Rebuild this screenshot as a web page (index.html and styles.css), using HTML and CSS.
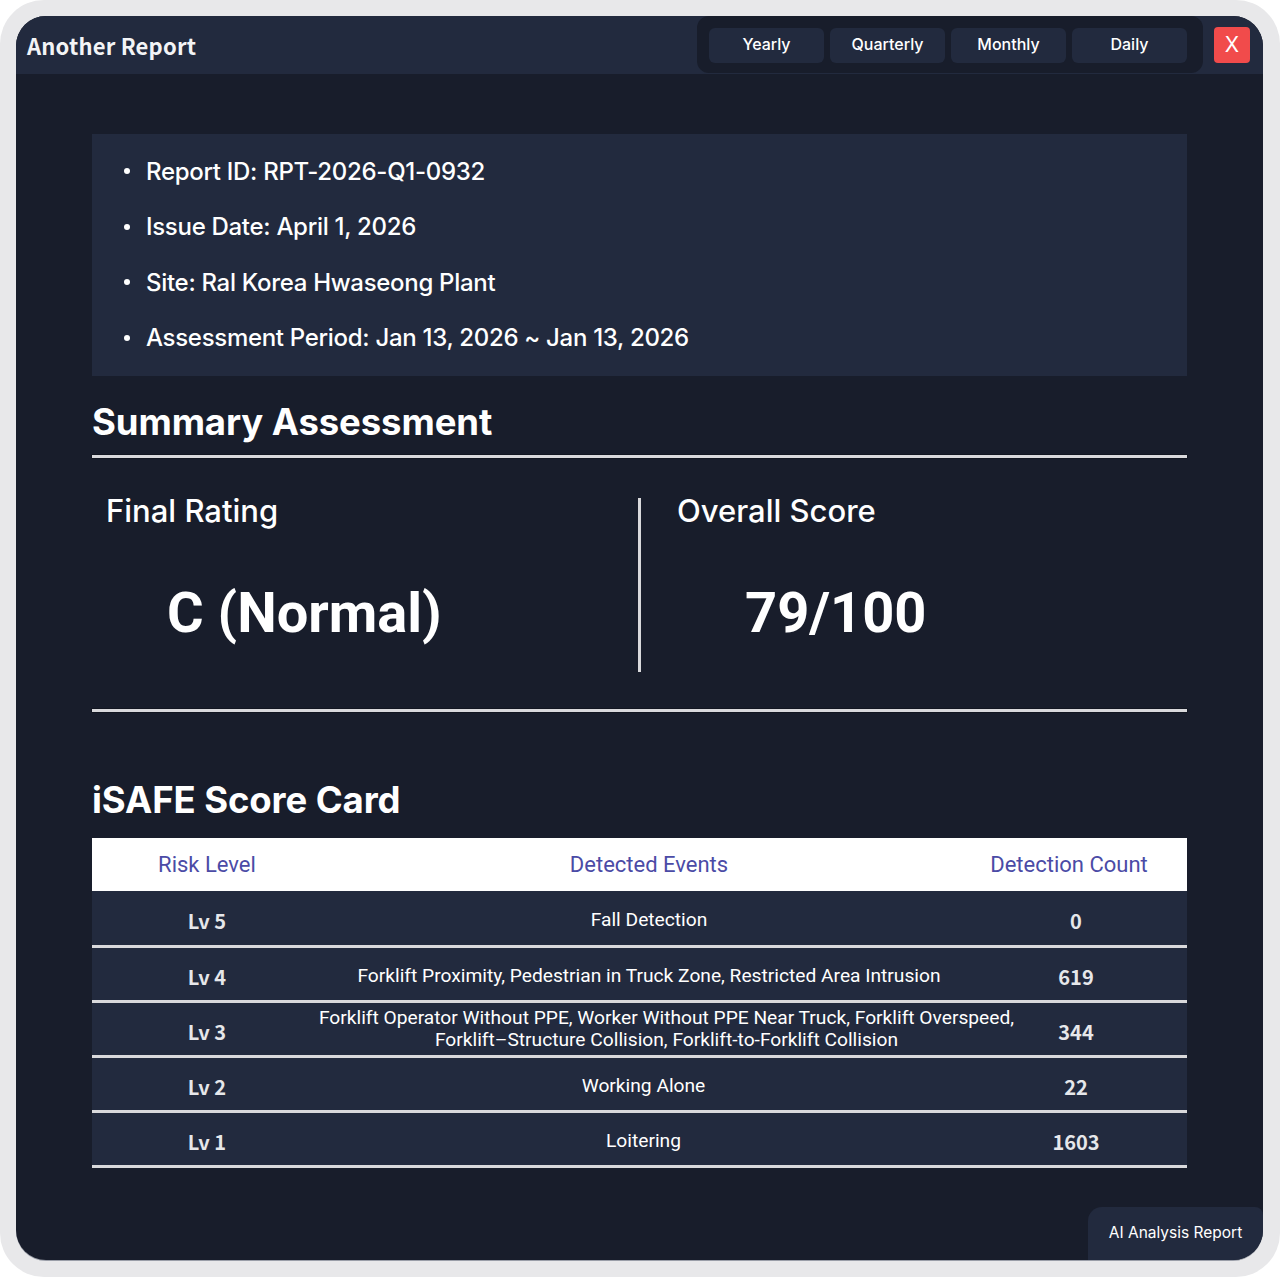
FILE: index.html
```html
<!DOCTYPE html>
<html lang="en">
<head>
<meta charset="utf-8">
<title>Another Report</title>
<link rel="stylesheet" href="styles.css">
</head>
<body>
<div class="frame">
  <div class="window">
    <header class="topbar">
      <h1 class="title">Another Report</h1>
      <nav class="tabs">
        <button class="tab">Yearly</button>
        <button class="tab">Quarterly</button>
        <button class="tab">Monthly</button>
        <button class="tab">Daily</button>
      </nav>
      <button class="close">X</button>
    </header>

    <main class="content">
      <ul class="meta">
        <li>Report ID: RPT-2026-Q1-0932</li>
        <li>Issue Date: April 1, 2026</li>
        <li>Site: Ral Korea Hwaseong Plant</li>
        <li>Assessment Period: Jan 13, 2026 ~ Jan 13, 2026</li>
      </ul>

      <h2 class="section-title">Summary Assessment</h2>
      <div class="rule"></div>
      <div class="summary">
        <div class="summary-cell rating">
          <h3 class="summary-label">Final Rating</h3>
          <div class="summary-value">C (Normal)</div>
        </div>
        <div class="divider"></div>
        <div class="summary-cell score">
          <h3 class="summary-label">Overall Score</h3>
          <div class="summary-value">79/100</div>
        </div>
      </div>
      <div class="rule"></div>

      <h2 class="section-title card-title">iSAFE Score Card</h2>
      <table class="scorecard">
        <colgroup>
          <col class="col-level">
          <col class="col-events">
          <col class="col-count">
        </colgroup>
        <thead>
          <tr>
            <th>Risk Level</th>
            <th class="events-head">Detected Events</th>
            <th class="count-head">Detection Count</th>
          </tr>
        </thead>
        <tbody>
          <tr>
            <td class="level">Lv 5</td>
            <td class="events shift">Fall Detection</td>
            <td class="count">0</td>
          </tr>
          <tr>
            <td class="level">Lv 4</td>
            <td class="events shift">Forklift Proximity, Pedestrian in Truck Zone, Restricted Area Intrusion</td>
            <td class="count">619</td>
          </tr>
          <tr>
            <td class="level">Lv 3</td>
            <td class="events multi"><span class="events-wide">Forklift Operator Without PPE, Worker Without PPE Near Truck, Forklift Overspeed,<br>Forklift–Structure Collision, Forklift-to-Forklift Collision</span></td>
            <td class="count">344</td>
          </tr>
          <tr>
            <td class="level">Lv 2</td>
            <td class="events">Working Alone</td>
            <td class="count">22</td>
          </tr>
          <tr>
            <td class="level">Lv 1</td>
            <td class="events">Loitering</td>
            <td class="count">1603</td>
          </tr>
        </tbody>
      </table>
    </main>

    <button class="ai-report">AI Analysis Report</button>
  </div>
</div>
</body>
</html>
```

FILE: styles.css
```css
* {
  box-sizing: border-box;
}

html,
body {
  margin: 0;
  padding: 0;
  background: #ffffff;
}

body {
  font-family: "Inter", "Noto Sans", sans-serif;
  color: #ffffff;
}

button {
  font: inherit;
  border: 0;
  cursor: pointer;
}

/* light outer bezel */
.frame {
  width: 1280px;
  height: 1277px;
  padding: 16px 17px 17px 16px;
  background: #e8e8ea;
  border-radius: 44px;
}

.window {
  position: relative;
  height: 100%;
  background: #181d2b;
  border-radius: 30px;
  overflow: hidden;
  box-shadow: 0 1px 0 #9a9ea8;
}

/* title bar */
.topbar {
  display: flex;
  align-items: center;
  height: 58px;
  padding: 0 13px 0 11px;
  background: #222a3e;
}

.title {
  margin: 0;
  font-family: "Noto Sans CJK KR", "Noto Sans", sans-serif;
  font-size: 22px;
  font-weight: 700;
  letter-spacing: 0.2px;
  color: #f3f4f6;
}

.tabs {
  display: flex;
  gap: 6px;
  align-self: flex-start;
  height: 57px;
  margin-left: auto;
  padding: 12px 16px 10px 12px;
  background: #181d2b;
  border-radius: 12px;
}

.tab {
  width: 115px;
  height: 35px;
  padding: 0 0 3px;
  background: #222a3e;
  border-radius: 6px;
  color: #ffffff;
  font-family: "Inter", sans-serif;
  font-size: 16px;
  font-weight: 500;
}

.close {
  width: 36px;
  height: 36px;
  margin-left: 11px;
  padding: 0;
  background: #f14b4b;
  border-radius: 4px;
  color: #ffffff;
  font-family: "Inter", sans-serif;
  font-size: 21px;
  font-weight: 400;
  line-height: 36px;
}

/* report body */
.content {
  padding: 60px 76px 0 76px;
}

.meta {
  list-style: none;
  margin: 0;
  padding: 10px 0 10px 32px;
  background: #222a3e;
}

.meta li {
  display: flex;
  align-items: center;
  height: 55.5px;
  padding-bottom: 1px;
  font-size: 24px;
  font-weight: 500;
  letter-spacing: -0.3px;
}

.meta li::before {
  content: "";
  width: 6px;
  height: 6px;
  margin-right: 16px;
  border-radius: 50%;
  background: #ffffff;
  flex: none;
}

.section-title {
  margin: 23.5px 0 11.5px;
  font-size: 36.5px;
  font-weight: 700;
  line-height: 44px;
  letter-spacing: -0.1px;
}

.card-title {
  margin: 66px 0 16px;
}

.rule {
  height: 3px;
  background: #d9d9dc;
  box-shadow: 0 0 0 0.5px #0d1018;
}

/* summary block */
.summary {
  display: flex;
  padding: 33px 0 37px;
}

.summary-cell.rating {
  flex: 0 0 546px;
  padding-left: 14px;
}

.summary-cell.score {
  flex: 1;
  padding-left: 36px;
}

.divider {
  flex: none;
  width: 3px;
  height: 174px;
  margin-top: 7px;
  background: #d9d9dc;
}

.summary-label {
  margin: 0;
  font-size: 31px;
  font-weight: 500;
  line-height: 40px;
}

.summary-value {
  margin-top: 46.5px;
  font-family: "Roboto", sans-serif;
  font-size: 56px;
  font-weight: 700;
  line-height: 70px;
}

.rating .summary-value {
  margin-left: 61px;
}

.score .summary-value {
  margin-left: 68px;
}

/* score card table */
.scorecard {
  width: 100%;
  table-layout: fixed;
  border-collapse: collapse;
  font-family: "Roboto", sans-serif;
}

.col-level {
  width: 230px;
}

.col-count {
  width: 222px;
}

.scorecard th {
  height: 53px;
  padding: 0;
  background: #ffffff;
  color: #4b4ba6;
  font-size: 22px;
  font-weight: 400;
  text-align: center;
}

.scorecard th.events-head {
  padding-left: 11px;
}

.scorecard th.count-head {
  padding-right: 14px;
}

.scorecard td {
  height: 55px;
  padding: 6px 0 0;
  background: #222a3e;
  border-bottom: 3px solid #d9d9dc;
  text-align: center;
  vertical-align: middle;
}

.scorecard .level,
.scorecard .count {
  font-family: "Noto Sans CJK KR", "Noto Sans", sans-serif;
  font-size: 20px;
  font-weight: 700;
  color: #e6e7ea;
}

.scorecard .events {
  padding-top: 5px;
  font-size: 19.2px;
  font-weight: 400;
  line-height: 22px;
  color: #ffffff;
}

.scorecard .events.shift {
  padding-left: 11px;
}

.scorecard .events.multi {
  padding-top: 1px;
  white-space: nowrap;
}

/* the long Lv 3 list spreads a little past the column on both sides */
.events-wide {
  display: block;
  margin: 0 -53px 0 -7px;
}

/* floating action in the corner */
.ai-report {
  position: absolute;
  right: 0;
  bottom: 0;
  width: 175px;
  height: 53px;
  padding: 0 0 3px;
  background: #222a3e;
  border-radius: 14px 8px 0 0;
  color: #ffffff;
  font-family: "Inter", sans-serif;
  font-size: 15.5px;
  font-weight: 400;
}
```
